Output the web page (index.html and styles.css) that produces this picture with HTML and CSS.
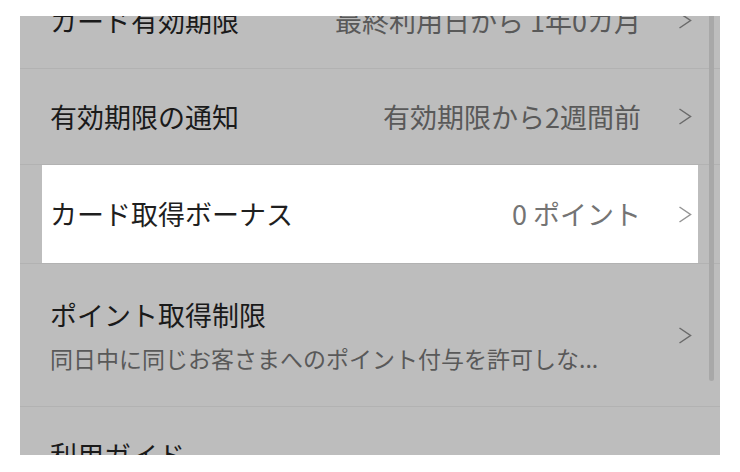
FILE: index.html
```html
<!DOCTYPE html>
<html lang="ja">
<head>
<meta charset="utf-8">
<title>カード設定</title>
<link rel="stylesheet" href="styles.css">
</head>
<body>
<div class="screen">
  <div class="list">
    <div class="row">
      <div class="label">カード有効期限</div>
      <div class="value">最終利用日から 1年0カ月</div>
      <svg class="chev" viewBox="0 0 14 17"><path d="M1.5 1 L12.5 8.5 L1.5 16"/></svg>
    </div>
    <div class="row">
      <div class="label">有効期限の通知</div>
      <div class="value">有効期限から2週間前</div>
      <svg class="chev" viewBox="0 0 14 17"><path d="M1.5 1 L12.5 8.5 L1.5 16"/></svg>
    </div>
    <div class="row row-spot">
      <div class="spot">
        <div class="label">カード取得ボーナス</div>
        <div class="value">0 ポイント</div>
        <svg class="chev" viewBox="0 0 14 17"><path d="M1.5 1 L12.5 8.5 L1.5 16"/></svg>
      </div>
    </div>
    <div class="row row-tall">
      <div class="label">
        <div class="title">ポイント取得制限</div>
        <div class="sub">同日中に同じお客さまへのポイント付与を許可しな...</div>
      </div>
      <svg class="chev" viewBox="0 0 14 17"><path d="M1.5 1 L12.5 8.5 L1.5 16"/></svg>
    </div>
    <div class="row">
      <div class="label">利用ガイド</div>
    </div>
  </div>
  <div class="scrollbar"></div>
</div>
</body>
</html>
```
FILE: styles.css
```css
html, body {
  margin: 0;
  padding: 0;
  background: #ffffff;
}

body {
  font-family: "Noto Sans CJK JP", "Noto Sans", sans-serif;
}

.screen {
  position: relative;
  width: 700px;
  height: 439px;
  margin: 16px 20px 0;
  background: #bdbdbd;
  overflow: hidden;
}

.list {
  margin-top: -43px;
}

.row {
  display: flex;
  align-items: center;
  height: 95px;
  padding: 0 28px 0 30px;
  border-bottom: 1px solid #b2b2b2;
}

.label {
  flex: 1;
  font-size: 27px;
  line-height: 38px;
  color: #1a1a1a;
  white-space: nowrap;
}

.value {
  font-size: 27px;
  line-height: 38px;
  color: #595959;
  margin-right: 37px;
  white-space: nowrap;
}

.chev {
  width: 14px;
  height: 17px;
  flex: none;
  fill: none;
  stroke: #6a6a6a;
  stroke-width: 1.5;
}

.row-spot {
  height: 98px;
  padding: 0;
}

.spot {
  flex: 1;
  display: flex;
  align-items: center;
  align-self: stretch;
  margin: 0 22px;
  padding: 0 6px 0 8px;
  background: #ffffff;
}

.spot .label {
  color: #1f1f1f;
}

.spot .value {
  color: #747474;
}

.spot .chev {
  stroke: #949494;
}

.row-tall {
  height: 142px;
}

.title {
  font-size: 27px;
  line-height: 38px;
  color: #1a1a1a;
}

.sub {
  margin-top: 8px;
  font-size: 23px;
  line-height: 32px;
  color: #595959;
}

.scrollbar {
  position: absolute;
  top: 0;
  left: 689px;
  width: 5px;
  height: 365px;
  border-radius: 0 0 3px 3px;
  background: #a8a8a8;
}
```
